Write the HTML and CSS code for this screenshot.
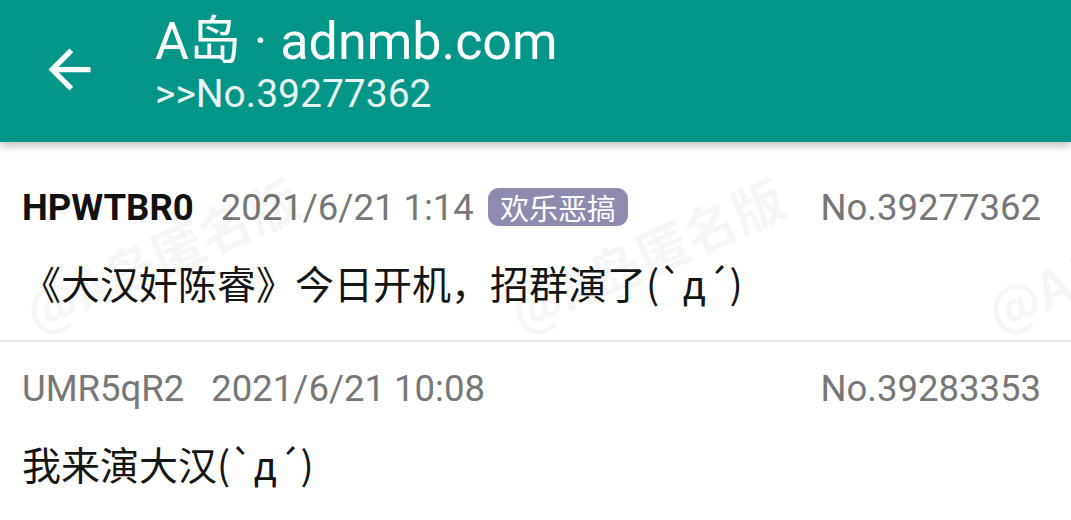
FILE: index.html
```html
<!DOCTYPE html>
<html lang="zh-CN">
<head>
<meta charset="utf-8">
<title>A岛 · adnmb.com</title>
<link rel="stylesheet" href="styles.css">
</head>
<body>
<div class="screen">
  <header class="toolbar">
    <div class="back">
      <svg viewBox="0 0 24 24" width="63" height="63"><path fill="#fff" d="M20 11H7.83l5.59-5.59L12 4l-8 8 8 8 1.41-1.41L7.83 13H20v-2z"/></svg>
    </div>
    <div class="titles">
      <div class="title">A岛 · adnmb.com</div>
      <div class="subtitle">&gt;&gt;No.39277362</div>
    </div>
  </header>
  <main class="list">
    <article class="post">
      <div class="meta">
        <span class="uid po">HPWTBR0</span>
        <span class="time">2021/6/21 1:14</span>
        <span class="tag">欢乐恶搞</span>
        <span class="no">No.39277362</span>
      </div>
      <div class="content">《大汉奸陈睿》今日开机，招群演了(`д´)</div>
    </article>
    <article class="post">
      <div class="meta">
        <span class="uid">UMR5qR2</span>
        <span class="time">2021/6/21 10:08</span>
        <span class="no">No.39283353</span>
      </div>
      <div class="content">我来演大汉(`д´)</div>
    </article>
  </main>
  <div class="watermarks" aria-hidden="true">
    <span class="wm wm1">@A岛匿名版</span>
    <span class="wm wm2">@A岛匿名版</span>
    <span class="wm wm3">@A岛匿名版</span>
  </div>
</div>
</body>
</html>
```
FILE: styles.css
```css
* { box-sizing: border-box; }
html, body { margin: 0; padding: 0; background: #fff; }
body {
  font-family: Roboto, "Noto Sans CJK SC", sans-serif;
  width: 1071px;
  height: 520px;
  overflow: hidden;
}
.screen { position: relative; width: 1071px; height: 520px; overflow: hidden; }

.toolbar {
  position: relative;
  z-index: 2;
  height: 142px;
  background: #029688;
  display: flex;
  align-items: flex-start;
  padding-left: 38px;
  box-shadow: 0 3px 9px rgba(0,0,0,0.28);
}
.back { width: 63px; height: 63px; margin-top: 38px; display: flex; }
.back svg { display: block; }
.titles { margin-left: 54px; padding-top: 12px; color: #fff; }
.title { font-size: 52px; line-height: 60px; white-space: nowrap; }
.subtitle { font-size: 39px; line-height: 44px; color: #e6f4f2; white-space: nowrap; }

.list { padding-top: 19px; }
.post {
  padding: 21px 30px 33px 22px;
  border-bottom: 2px solid #e9e9e9;
}
.meta {
  display: flex;
  align-items: center;
  height: 50px;
  font-size: 36.5px;
  color: #777;
  white-space: nowrap;
}
.uid { margin-right: 27px; }
.uid.po { color: #111; font-weight: 700; }
.tag {
  margin-left: 14px;
  height: 38px;
  padding: 0 12px;
  border-radius: 11px;
  background: #8f8bb0;
  color: #fff;
  font-family: "Noto Sans CJK SC", sans-serif;
  font-size: 29px;
  line-height: 38px;
}
.no { margin-left: auto; }
.content {
  margin-top: 25px;
  font-family: "Noto Sans CJK SC", sans-serif;
  font-size: 39px;
  line-height: 50px;
  color: #151515;
  white-space: nowrap;
}

.watermarks { position: absolute; inset: 0; pointer-events: none; z-index: 1; }
.wm {
  position: absolute;
  font-family: "Noto Sans CJK SC", sans-serif;
  font-weight: 700;
  font-size: 52px;
  line-height: 1;
  color: rgba(0,0,0,0.035);
  white-space: nowrap;
  transform-origin: left bottom;
  transform: rotate(-24deg);
}
.wm1 { left: 38px; top: 285px; }
.wm2 { left: 523px; top: 285px; }
.wm3 { left: 1000px; top: 285px; }
```
